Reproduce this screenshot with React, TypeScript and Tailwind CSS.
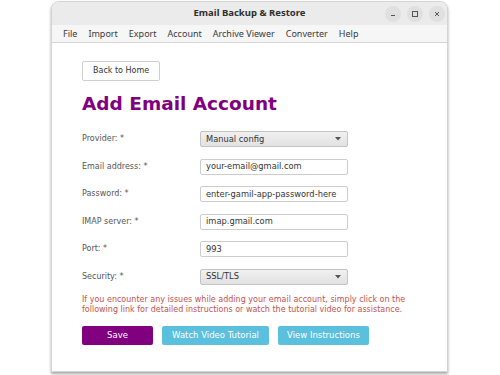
const menuItems = ['File', 'Import', 'Export', 'Account', 'Archive Viewer', 'Converter', 'Help'];

const fields = [
  { label: 'Provider: *', value: 'Manual config', select: true },
  { label: 'Email address: *', value: 'your-email@gmail.com' },
  { label: 'Password: *', value: 'enter-gamil-app-password-here' },
  { label: 'IMAP server: *', value: 'imap.gmail.com' },
  { label: 'Port: *', value: '993' },
  { label: 'Security: *', value: 'SSL/TLS', select: true },
];

function WinButton({ kind }: { kind: 'min' | 'max' | 'close' }) {
  return (
    <div className="w-[16px] h-[16px] rounded-full bg-[#e0e0e0] flex items-center justify-center">
      <svg width="8" height="8" viewBox="0 0 8 8" fill="none" stroke="#555" strokeWidth="1">
        {kind === 'min' && <path d="M2 5.5h4" />}
        {kind === 'max' && <rect x="1.5" y="1.5" width="5" height="5" />}
        {kind === 'close' && <path d="M2 2l4 4M6 2l-4 4" />}
      </svg>
    </div>
  );
}

export default function App() {
  return (
    <div className="w-[500px] h-[375px] bg-white pl-[51px] pt-[1px] overflow-hidden">
      <div className="w-[397px] h-[371px] bg-white rounded-t-[8px] border border-[#d4d4d4] shadow-[0_2px_3px_rgba(0,0,0,0.35)] flex flex-col overflow-hidden">
        {/* title bar */}
        <div className="h-[23px] bg-[#ebebeb] relative flex items-center justify-center shrink-0">
          <span className="text-[9.5px] font-bold text-[#2e2e2e] font-['Noto_Sans',sans-serif]">
            Email Backup &amp; Restore
          </span>
          <div className="absolute right-[2px] top-[4px] flex gap-[6px]">
            <WinButton kind="min" />
            <WinButton kind="max" />
            <WinButton kind="close" />
          </div>
        </div>
        {/* menu bar */}
        <div className="h-[18px] bg-[#f6f6f6] border-b border-[#d6d6d6] flex items-center pl-[11px] gap-[11px] shrink-0 font-['Noto_Sans',sans-serif] text-[9px] text-[#3a3a3a]">
          {menuItems.map((m) => (
            <span key={m}>{m}</span>
          ))}
        </div>
        {/* content */}
        <div className="pl-[30px] pt-[13px] font-['DejaVu_Sans',sans-serif]">
          <button className="h-[20px] px-[10px] border border-[#cfcfcf] rounded-[2px] bg-white text-[8px] text-[#333]">
            Back to Home
          </button>
          <h1 className="mt-[12px] text-[18.5px] leading-[22px] font-bold text-[#800080]">Add Email Account</h1>
          <div className="mt-[16px] flex flex-col gap-[11.5px]">
            {fields.map((f) => (
              <div key={f.label} className="flex items-center h-[16px]">
                <span className="w-[118px] text-[8px] text-[#555]">{f.label}</span>
                {f.select ? (
                  <div className="w-[148px] h-[16px] border border-[#c4c4c4] rounded-[2px] bg-gradient-to-b from-[#f0f0f0] to-[#e2e2e2] flex items-center justify-between px-[5px]">
                    <span className="text-[8.3px] text-[#333]">{f.value}</span>
                    <svg width="6" height="4" viewBox="0 0 6 4" className="mr-[1px]">
                      <path d="M0 0h6L3 3.5z" fill="#555" />
                    </svg>
                  </div>
                ) : (
                  <div className="w-[148px] h-[16px] border border-[#cdcdcd] rounded-[2px] bg-white flex items-center px-[5px]">
                    <span className="text-[8.3px] text-[#333]">{f.value}</span>
                  </div>
                )}
              </div>
            ))}
          </div>
          <p className="mt-[10px] text-[8px] leading-[10px] text-[#c4524e] w-[340px]">
            If you encounter any issues while adding your email account, simply click on the following link for
            detailed instructions or watch the tutorial video for assistance.
          </p>
          <div className="mt-[11px] flex gap-[9px] text-[8.5px] text-white">
            <button className="w-[71px] h-[19px] rounded-[2px] bg-[#800080]">Save</button>
            <button className="w-[107px] h-[19px] rounded-[2px] bg-[#5bc0de]">Watch Video Tutorial</button>
            <button className="w-[91px] h-[19px] rounded-[2px] bg-[#5bc0de]">View Instructions</button>
          </div>
        </div>
      </div>
    </div>
  );
}
